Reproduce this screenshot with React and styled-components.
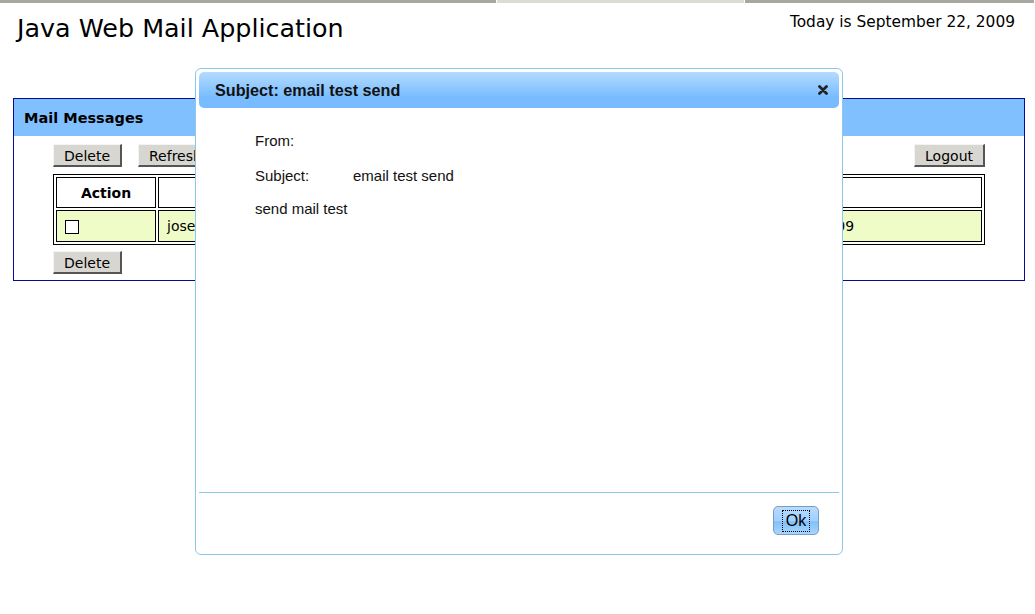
import React from "react";
import styled, { createGlobalStyle } from "styled-components";

const GlobalStyle = createGlobalStyle`
    html, body {
        margin: 0;
        padding: 0;
        background: #ffffff;
    }
    body {
        font-family: "DejaVu Sans", Verdana, sans-serif;
        color: #000;
    }
    #root {
        position: relative;
        width: 1035px;
        height: 614px;
        overflow: hidden;
    }
`;

const TopStrip = styled.div`
    display: flex;
    height: 3px;
`;

const StripPart = styled.div`
    flex: ${(props) => props.grow};
    background: ${(props) => props.color};
    border-right: 1px solid #ffffff;
`;

const Header = styled.div`
    display: flex;
    justify-content: space-between;
    align-items: flex-start;
    padding: 10px 20px 0 17px;
    height: 85px;
    box-sizing: border-box;
`;

const AppTitle = styled.h1`
    margin: 0;
    font-size: 25.4px;
    font-weight: normal;
    line-height: 30px;
`;

const Today = styled.div`
    font-size: 15.4px;
    line-height: 18px;
`;

const Panel = styled.div`
    margin: 10px 10px 0 13px;
    border: 1px solid #0a0a9a;
`;

const PanelHeader = styled.div`
    background: #80c0ff;
    height: 37px;
    display: flex;
    align-items: center;
    padding-left: 10px;
    font-weight: bold;
    font-size: 14.5px;
`;

const PanelBody = styled.div`
    padding: 8px 39px 6px 39px;
`;

const Toolbar = styled.div`
    display: flex;
    gap: 16px;
    margin-bottom: 7px;
`;

const Spacer = styled.div`
    flex: 1;
`;

const Button = styled.button`
    font-family: "DejaVu Sans", Verdana, sans-serif;
    font-size: 14px;
    height: 23px;
    padding: 1px 10px 0 10px;
    background: #d8d6d0;
    color: #000;
    border: none;
    border-right: 2px solid #555;
    border-bottom: 2px solid #555;
    border-top: 1px solid #f4f4f4;
    border-left: 1px solid #f4f4f4;
    box-sizing: border-box;
`;

const Table = styled.table`
    width: 100%;
    border: 1px solid #000;
    border-spacing: 2px;
    margin-bottom: 6px;
`;

const Th = styled.th`
    border: 1px solid #000;
    height: 27px;
    font-size: 14px;
    font-weight: bold;
    width: ${(props) => props.w || "auto"};
`;

const Td = styled.td`
    border: 1px solid #000;
    height: 30px;
    background: #f0fcc8;
    font-size: 14px;
    padding: 0 8px;
`;

const Check = styled.span`
    display: inline-block;
    width: 12px;
    height: 12px;
    border: 1px solid #000;
    background: #fff;
    vertical-align: middle;
`;

const Modal = styled.div`
    position: absolute;
    left: 195px;
    top: 68px;
    width: 648px;
    height: 487px;
    box-sizing: border-box;
    border: 1px solid #8cc6e8;
    border-radius: 6px;
    background: #fff;
    padding: 3px;
    display: flex;
    flex-direction: column;
    font-family: "Liberation Sans", Arial, sans-serif;
`;

const ModalTitle = styled.div`
    height: 36px;
    flex: none;
    border-radius: 5px;
    background: linear-gradient(#b4dcff, #78bcff 70%);
    display: flex;
    align-items: center;
    justify-content: space-between;
    padding: 0 11px 0 16px;
    font-weight: bold;
    font-size: 16.2px;
    color: #111;
`;

const ModalBody = styled.div`
    flex: 1;
    padding: 24px 56px;
    display: grid;
    grid-template-columns: 98px 1fr;
    grid-template-rows: 35px 33px 34px;
    align-content: start;
    font-size: 15px;
    color: #111;
`;

const Label = styled.div`
    grid-column: ${(props) => (props.wide ? "1 / 3" : "auto")};
`;

const ModalFooter = styled.div`
    height: 59px;
    flex: none;
    box-sizing: border-box;
    border-top: 1px solid #8cc6e8;
    display: flex;
    justify-content: flex-end;
    align-items: flex-start;
    padding: 13px 20px 0 0;
`;

const OkButton = styled.button`
    width: 46px;
    height: 29px;
    border: 1px solid #7a9cc0;
    border-radius: 5px;
    background: linear-gradient(#b8dcff, #a0d0ff 50%, #80c0f8 55%, #a8d6ff);
    font-family: "Liberation Sans", Arial, sans-serif;
    font-size: 16px;
    color: #000;
    padding: 0;
    display: flex;
    align-items: center;
    justify-content: center;
`;

const FocusRing = styled.span`
    border: 1px dotted #000;
    padding: 1px 3px;
    line-height: 18px;
`;

const CloseIcon = () => (
    <svg width="10" height="10" viewBox="0 0 10 10">
        <path d="M1.5 1.5 L8.5 8.5 M8.5 1.5 L1.5 8.5" stroke="#222" strokeWidth="2.8" strokeLinecap="round" />
    </svg>
);

const App = () => {
    return (
        <>
            <GlobalStyle />
            <TopStrip>
                <StripPart grow={497} color="#a8a8a0" />
                <StripPart grow={248} color="#dcdcd4" />
                <StripPart grow={290} color="#a8a8a0" />
            </TopStrip>
            <Header>
                <AppTitle>Java Web Mail Application</AppTitle>
                <Today>Today is September 22, 2009</Today>
            </Header>
            <Panel>
                <PanelHeader>Mail Messages</PanelHeader>
                <PanelBody>
                    <Toolbar>
                        <Button>Delete</Button>
                        <Button>Refresh</Button>
                        <Spacer />
                        <Button>Logout</Button>
                    </Toolbar>
                    <Table>
                        <thead>
                            <tr>
                                <Th w="96px">Action</Th>
                                <Th>From</Th>
                                <Th>Subject</Th>
                                <Th w="226px"></Th>
                            </tr>
                        </thead>
                        <tbody>
                            <tr>
                                <Td>
                                    <Check />
                                </Td>
                                <Td>jose</Td>
                                <Td>email test send</Td>
                                <Td>Sep 22, 2009</Td>
                            </tr>
                        </tbody>
                    </Table>
                    <Button>Delete</Button>
                </PanelBody>
            </Panel>
            <Modal>
                <ModalTitle>
                    <span>Subject: email test send</span>
                    <CloseIcon />
                </ModalTitle>
                <ModalBody>
                    <Label>From:</Label>
                    <Label></Label>
                    <Label>Subject:</Label>
                    <Label>email test send</Label>
                    <Label wide>send mail test</Label>
                </ModalBody>
                <ModalFooter>
                    <OkButton>
                        <FocusRing>Ok</FocusRing>
                    </OkButton>
                </ModalFooter>
            </Modal>
        </>
    );
};

export default App;
